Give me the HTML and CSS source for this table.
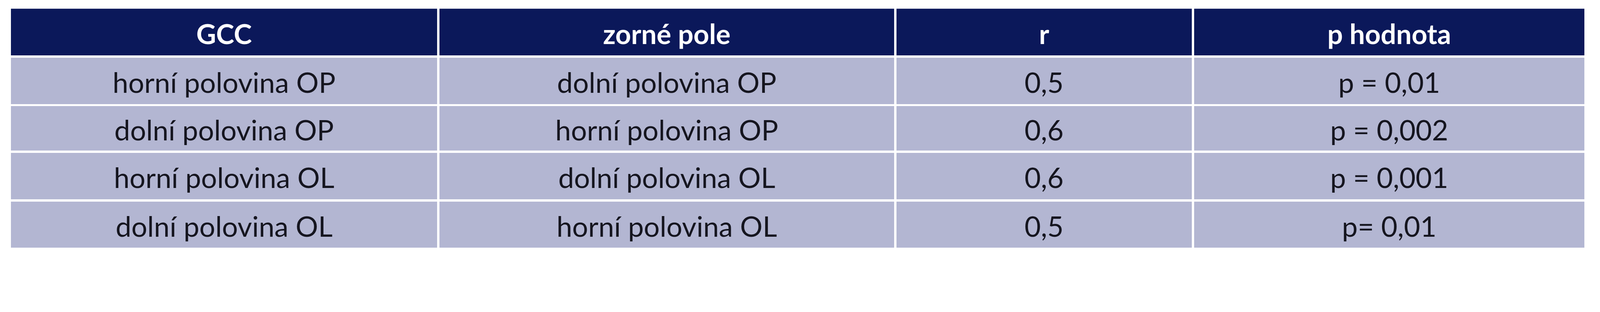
FILE: index.html
```html
<!DOCTYPE html>
<html lang="cs">
<head>
<meta charset="utf-8">
<title>GCC – zorné pole</title>
<link rel="stylesheet" href="styles.css">
</head>
<body>
<div class="page">
  <div class="table" role="table">
    <div class="cell head" role="columnheader">GCC</div>
    <div class="cell head" role="columnheader">zorné pole</div>
    <div class="cell head" role="columnheader">r</div>
    <div class="cell head" role="columnheader">p hodnota</div>

    <div class="cell" role="cell">horní polovina OP</div>
    <div class="cell" role="cell">dolní polovina OP</div>
    <div class="cell" role="cell">0,5</div>
    <div class="cell" role="cell">p = 0,01</div>

    <div class="cell" role="cell">dolní polovina OP</div>
    <div class="cell" role="cell">horní polovina OP</div>
    <div class="cell" role="cell">0,6</div>
    <div class="cell" role="cell">p = 0,002</div>

    <div class="cell" role="cell">horní polovina OL</div>
    <div class="cell" role="cell">dolní polovina OL</div>
    <div class="cell" role="cell">0,6</div>
    <div class="cell" role="cell">p = 0,001</div>

    <div class="cell" role="cell">dolní polovina OL</div>
    <div class="cell" role="cell">horní polovina OL</div>
    <div class="cell" role="cell">0,5</div>
    <div class="cell" role="cell">p= 0,01</div>
  </div>
</div>
</body>
</html>
```

FILE: styles.css
```css
html, body {
  margin: 0;
  padding: 0;
  background: #ffffff;
}

.page {
  padding: 22.4px 0 0 28.25px;
}

.table {
  display: grid;
  grid-template-columns: 1090.9px 1164px 756.1px 999.5px;
  grid-template-rows: 119.6px 118.8px 113.8px 118.8px 118.8px;
  gap: 5.8px;
  width: 4034px;
  font-family: Lato, "Liberation Sans", sans-serif;
}

.cell {
  display: flex;
  align-items: center;
  justify-content: center;
  box-sizing: border-box;
  padding-top: 6px;
  background: #b3b6d2;
  color: #15151f;
  font-size: 72px;
  line-height: 1;
  white-space: nowrap;
}

.head {
  padding-top: 7px;
  background: #0b185a;
  color: #ffffff;
  font-size: 70px;
  font-weight: 700;
  border-top: 1px solid #5a6392;
}
```
